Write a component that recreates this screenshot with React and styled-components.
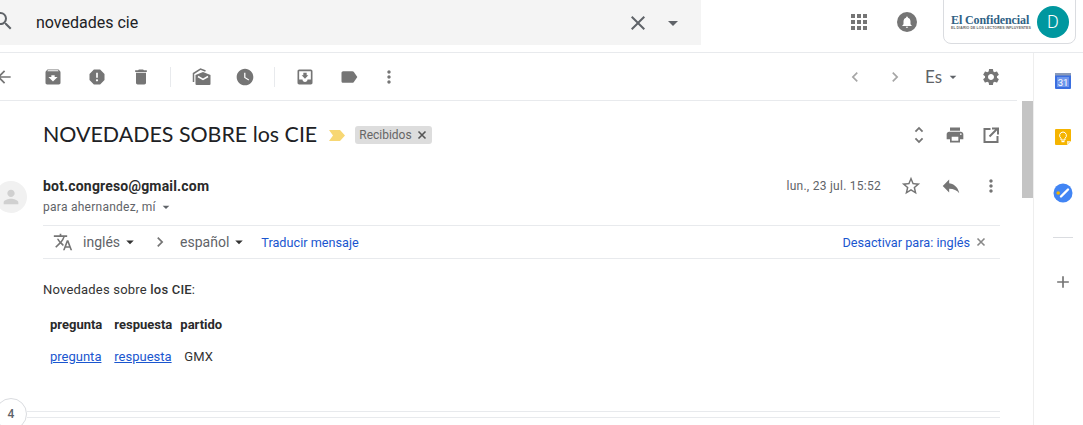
import React from 'react'
import styled, { createGlobalStyle } from 'styled-components'
import {
  MdSearch, MdClose, MdArrowDropDown, MdNotifications, MdArrowBack, MdArchive, MdReport, MdDelete,
  MdWatchLater, MdMoveToInbox, MdLabel, MdMoreVert, MdChevronLeft, MdChevronRight, MdSettings,
  MdUnfoldMore, MdPrint, MdStarBorder, MdReply, MdTranslate, MdAdd, MdPerson,
} from 'react-icons/md'

const GlobalStyle = createGlobalStyle`
  html, body { margin: 0; padding: 0; height: 100%; overflow: hidden; background: #fff; }
  body { font-family: Roboto, "Liberation Sans", sans-serif; color: #222; }
`

const Page = styled.div`
  width: 1083px;
  height: 425px;
  overflow: hidden;
  display: flex;
  flex-direction: column;
`

const Header = styled.header`
  height: 52px;
  flex: none;
  display: flex;
  align-items: flex-start;
  border-bottom: 1px solid #e8eaed;
`

const SearchBox = styled.div`
  width: 701px;
  height: 45px;
  padding-right: 5px;
  box-sizing: border-box;
  background: #f4f4f4;
  display: flex;
  align-items: center;
  color: #5f6368;
  font-size: 16px;
`

const SearchIcon = styled(MdSearch)`
  margin-left: -9px;
  margin-top: -3px;
`

const SearchText = styled.span`
  flex: 1;
  margin-left: 21px;
  color: #202124;
`

const HeaderActions = styled.div`
  margin-left: auto;
  display: flex;
  align-items: flex-start;
  color: #757575;
`

const HeaderIcon = styled.div`
  width: ${p => p.$w || 40}px;
  height: 44px;
  margin-right: ${p => p.$after || 0}px;
  display: flex;
  align-items: center;
  justify-content: center;
`

const AppsGrid = styled.div`
  display: grid;
  grid-template-columns: repeat(3, 4px);
  grid-auto-rows: 4px;
  gap: 2px;
  & > i { background: #757575; display: block; }
`

const BellDisc = styled.div`
  width: 20px;
  height: 20px;
  border-radius: 50%;
  background: #757575;
  color: #fff;
  display: flex;
  align-items: center;
  justify-content: center;
`

const AccountCard = styled.div`
  width: 133px;
  height: 45px;
  margin: -1px 7px 0 0;
  padding: 0 6px 0 7px;
  box-sizing: border-box;
  border: 1px solid #dadce0;
  border-radius: 0 0 8px 8px;
  display: flex;
  align-items: center;
  justify-content: space-between;
`

const Logo = styled.div`
  width: 79px;
  font-family: "Liberation Serif", serif;
  font-weight: 700;
  color: #2f6285;
  line-height: 12px;
  white-space: nowrap;
  font-size: 12px;
  letter-spacing: -0.1px;
`

const LogoTag = styled.div`
  font-family: "Liberation Sans", sans-serif;
  font-size: 3.5px;
  line-height: 4px;
  color: #666;
  letter-spacing: 0.08px;
`

const Avatar = styled.div`
  width: 32px;
  height: 32px;
  border-radius: 50%;
  background: #00979f;
  color: #fff;
  font-size: 18px;
  font-weight: 300;
  display: flex;
  align-items: center;
  justify-content: center;
`

const Body = styled.div`
  flex: 1;
  min-height: 0;
  display: flex;
`

const MainColumn = styled.main`
  width: 1033px;
  flex: none;
  display: flex;
  flex-direction: column;
  min-height: 0;
`

const Toolbar = styled.div`
  height: 47px;
  flex: none;
  margin-right: 16px;
  padding-right: 4px;
  display: flex;
  align-items: center;
  border-bottom: 1px solid #e8eaed;
  color: #757575;
`

const ToolButton = styled.div`
  width: ${p => p.$w || 44}px;
  height: 44px;
  flex: none;
  display: flex;
  align-items: center;
  justify-content: center;
  color: ${p => p.$color || 'inherit'};
`

const BackButton = styled(ToolButton)`
  margin: 0 5px 0 -18px;
`

const ToolDivider = styled.div`
  width: 1px;
  height: 20px;
  margin: 0 8px 0 7px;
  background: #e8eaed;
`

const LangMenu = styled.div`
  margin-left: auto;
  display: flex;
  align-items: center;
`

const LangPicker = styled.div`
  width: 54px;
  padding-left: 10px;
  box-sizing: border-box;
  display: flex;
  align-items: center;
  color: #5f6368;
  font-family: Lato, sans-serif;
  font-size: 17px;
  & > svg { margin-left: 3px; }
`

const ContentRow = styled.div`
  flex: 1;
  min-height: 0;
  display: flex;
`

const Content = styled.div`
  width: 1021px;
  flex: none;
`

const Scrollbar = styled.div`
  width: 11px;
  margin-left: 1px;
  flex: none;
  & > div { height: 97px; background: #c4c4c4; }
`

const SubjectRow = styled.div`
  height: 68px;
  padding: 0 12px 0 44px;
  display: flex;
  align-items: center;
`

const Subject = styled.h1`
  margin: 0 0 3px -1px;
  font-family: Lato, sans-serif;
  font-weight: 400;
  font-size: 21.4px;
  color: #202124;
`

const ImportanceMarker = styled.svg`
  margin-left: 12px;
  width: 16px;
  height: 11px;
`

const Chip = styled.span`
  margin-left: 10px;
  height: 18px;
  padding: 0 5px 0 4px;
  border-radius: 3px;
  background: #dddddd;
  color: #666;
  font-size: 12px;
  display: inline-flex;
  align-items: center;
  gap: 5px;
`

const CrossIcon = styled.svg`
  width: ${p => p.$size}px;
  height: ${p => p.$size}px;
  flex: none;
  stroke: ${p => p.$color};
  stroke-width: 1.6;
  fill: none;
`

const SubjectActions = styled.div`
  margin-left: auto;
  display: flex;
  color: #757575;
`

const SenderRow = styled.div`
  height: 56px;
  display: flex;
  align-items: flex-start;
  padding-right: 10px;
`

const SenderAvatar = styled.div`
  width: 32px;
  height: 32px;
  margin: 12px 16px 0 -5px;
  border-radius: 50%;
  background: #f1f1f1;
  color: #d0d0d0;
  display: flex;
  align-items: center;
  justify-content: center;
`

const SenderInfo = styled.div`
  padding-top: 7px;
`

const SenderName = styled.div`
  font-size: 14px;
  line-height: 20px;
  font-weight: 700;
  color: #2a2a2a;
  letter-spacing: 0.18px;
`

const Recipients = styled.div`
  font-size: 12px;
  line-height: 20px;
  margin-top: 1px;
  color: #5f6368;
  letter-spacing: 0.26px;
  display: flex;
  align-items: center;
  & > svg { margin-left: 2px; }
`

const SenderMeta = styled.div`
  margin-left: auto;
  display: flex;
  align-items: center;
  color: #757575;
  height: 34px;
`

const DateText = styled.span`
  font-size: 12px;
  color: #5f6368;
  letter-spacing: 0.26px;
  margin-right: 10px;
`

const MetaButton = styled.div`
  width: 40px;
  display: flex;
  justify-content: center;
`

const TranslateBar = styled.div`
  height: 32px;
  margin: 0 21px 0 43px;
  border-top: 1px solid #e8eaed;
  border-bottom: 1px solid #e8eaed;
  display: flex;
  align-items: center;
  color: #5f6368;
  font-size: 14px;
`

const TranslateIcon = styled(MdTranslate)`
  margin: 0 1px 0 10px;
  color: #757575;
`

const LangSelect = styled.span`
  margin-left: ${p => p.$gap}px;
  display: inline-flex;
  align-items: center;
`

const BlackCaret = styled(MdArrowDropDown)`
  color: #333;
  margin-left: 1px;
`

const Arrow = styled(MdChevronRight)`
  margin-left: 11px;
  color: #757575;
`

const BarLink = styled.a`
  font-size: 12.7px;
  color: #1a56cf;
  margin-left: ${p => p.$gap || 0}px;
`

const DismissSlot = styled.span`
  margin: 0 14px 0 6px;
  display: flex;
`

const Spacer = styled.div`
  flex: 1;
`

const MessageBody = styled.div`
  margin: 21px 0 0 43px;
  font-size: 13px;
  line-height: 20px;
  color: #333;
`

const Intro = styled.p`
  margin: 0;
  letter-spacing: 0.2px;
  & > b { font-weight: 500; }
`

const PollTable = styled.table`
  border-collapse: collapse;
  margin: 15px 0 0 7px;
`

const HeadCell = styled.th`
  padding: 0 ${p => p.$pad}px 12px 0;
  text-align: left;
  font-weight: 700;
  color: #2a2a2a;
  height: 20px;
`

const DataCell = styled.td`
  padding: 0 ${p => p.$pad || 0}px 0 ${p => p.$left || 0}px;
  height: 20px;
`

const PollLink = styled.a`
  color: #1a56cf;
  text-decoration: underline;
`

const Collapsed = styled.div`
  margin: 31px 21px 0 -5px;
  display: flex;
  align-items: flex-start;
`

const CountCircle = styled.div`
  width: 30px;
  height: 30px;
  flex: none;
  border: 1px solid #dadce0;
  border-radius: 50%;
  color: #5f6368;
  font-size: 12px;
  font-weight: 500;
  display: flex;
  align-items: center;
  justify-content: center;
`

const CollapsedLines = styled.div`
  flex: 1;
  height: 5px;
  margin-top: 13px;
  border-top: 1px solid #e8eaed;
  border-bottom: 1px solid #e8eaed;
`

const SidePanel = styled.aside`
  flex: 1;
  border-left: 1px solid #eeeeee;
  display: flex;
  flex-direction: column;
  align-items: center;
  padding: 18px 0 0 8px;
  gap: 36px;
`

const SideDivider = styled.div`
  width: 20px;
  height: 1px;
  background: #dadce0;
  margin-top: -2px;
`

const SidePlus = styled(MdAdd)`
  color: #757575;
  margin-top: -2px;
`

const AppsIcon = () => (
  <AppsGrid>
    {Array.from({ length: 9 }).map((_, i) => <i key={i} />)}
  </AppsGrid>
)

const Cross = ({ size, color }) => (
  <CrossIcon viewBox="0 0 10 10" $size={size} $color={color}>
    <path d="M1.500 1.500l7 7M8.500 1.500l-7 7" />
  </CrossIcon>
)

const MarkReadIcon = () => (
  <svg width="20" height="20" viewBox="0 0 20 20">
    <path d="M2.500 15V6.500L9.500 2l5 2" fill="none" stroke="#757575" strokeWidth="1.500" />
    <path d="M4.500 8L12 5l7.500 3v9a1 1 0 0 1-1 1h-13a1 1 0 0 1-1-1z" fill="#757575" />
    <path d="M7 9.500l5 3 5-3" fill="none" stroke="#fff" strokeWidth="1.500" />
  </svg>
)

const PopOutIcon = () => (
  <svg width="20" height="20" viewBox="0 0 20 20" fill="none" stroke="#757575" strokeWidth="2">
    <path d="M9.500 4H3.500v13h13v-6" />
    <path d="M8.500 11.500l8-8M11 3.500h6v6" />
  </svg>
)

const CalendarIcon = () => (
  <svg width="20" height="20" viewBox="0 0 20 20">
    <rect x="2" y="2" width="16" height="16" rx="1" fill="#3b6fe0" />
    <rect x="2" y="2" width="16" height="2.500" fill="#8a9ab8" />
    <rect x="4" y="6" width="12" height="10" fill="#6f97ec" />
    <text x="10" y="14.500" textAnchor="middle" fontSize="9.500" fontFamily="Roboto, sans-serif" fill="#fff">31</text>
  </svg>
)

const KeepIcon = () => (
  <svg width="20" height="20" viewBox="0 0 20 20">
    <path d="M3 2h14a1 1 0 0 1 1 1v11l-4 4H3a1 1 0 0 1-1-1V3a1 1 0 0 1 1-1z" fill="#f5b400" />
    <path d="M18 14h-4v4z" fill="#fce8b2" />
    <path d="M10 5a3.500 3.500 0 0 0-2 6.300V13h4v-1.700A3.500 3.500 0 0 0 10 5z" fill="none" stroke="#fff" strokeWidth="1" />
    <rect x="8.500" y="14" width="3" height="1.200" fill="#fff" />
  </svg>
)

const TasksIcon = () => (
  <svg width="20" height="20" viewBox="0 0 20 20">
    <circle cx="10" cy="10" r="9.500" fill="#4285f4" />
    <path d="M8 13.500l7-7" stroke="#fff" strokeWidth="2.400" strokeLinecap="round" />
    <circle cx="5.200" cy="10" r="1.800" fill="#f5b400" />
  </svg>
)

const App = () => (
  <Page>
    <GlobalStyle />
    <Header>
      <SearchBox>
        <SearchIcon size={24} />
        <SearchText>novedades cie</SearchText>
        <HeaderIcon $w={24}><MdClose size={24} /></HeaderIcon>
        <HeaderIcon $w={46}><MdArrowDropDown size={24} /></HeaderIcon>
      </SearchBox>
      <HeaderActions>
        <HeaderIcon $w={40}><AppsIcon /></HeaderIcon>
        <HeaderIcon $w={56} $after={8}>
          <BellDisc><MdNotifications size={14} /></BellDisc>
        </HeaderIcon>
        <AccountCard>
          <Logo>
            El Confidencial
            <LogoTag>EL DIARIO DE LOS LECTORES INFLUYENTES</LogoTag>
          </Logo>
          <Avatar>D</Avatar>
        </AccountCard>
      </HeaderActions>
    </Header>
    <Body>
      <MainColumn>
        <Toolbar>
          <BackButton><MdArrowBack size={20} /></BackButton>
          <ToolButton><MdArchive size={20} /></ToolButton>
          <ToolButton><MdReport size={20} /></ToolButton>
          <ToolButton><MdDelete size={20} /></ToolButton>
          <ToolDivider />
          <ToolButton><MarkReadIcon /></ToolButton>
          <ToolButton><MdWatchLater size={20} /></ToolButton>
          <ToolDivider />
          <ToolButton><MdMoveToInbox size={20} /></ToolButton>
          <ToolButton><MdLabel size={20} /></ToolButton>
          <ToolButton $w={36}><MdMoreVert size={20} /></ToolButton>
          <LangMenu>
            <ToolButton $w={40} $color="#a6a6a6"><MdChevronLeft size={20} /></ToolButton>
            <ToolButton $w={40} $color="#a6a6a6"><MdChevronRight size={20} /></ToolButton>
            <LangPicker>Es<MdArrowDropDown size={16} /></LangPicker>
            <ToolButton><MdSettings size={20} /></ToolButton>
          </LangMenu>
        </Toolbar>
        <ContentRow>
          <Content>
            <SubjectRow>
              <Subject>NOVEDADES SOBRE los CIE</Subject>
              <ImportanceMarker viewBox="0 0 16 11">
                <path d="M0 0h11l5 5.500-5 5.500H0l4-5.500z" fill="#f7d774" />
              </ImportanceMarker>
              <Chip>Recibidos<Cross size={10} color="#555" /></Chip>
              <SubjectActions>
                <ToolButton $w={36}><MdUnfoldMore size={22} /></ToolButton>
                <ToolButton $w={36}><MdPrint size={20} /></ToolButton>
                <ToolButton $w={36}><PopOutIcon /></ToolButton>
              </SubjectActions>
            </SubjectRow>
            <SenderRow>
              <SenderAvatar><MdPerson size={22} /></SenderAvatar>
              <SenderInfo>
                <SenderName>bot.congreso@gmail.com</SenderName>
                <Recipients>para ahernandez, mí<MdArrowDropDown size={16} /></Recipients>
              </SenderInfo>
              <SenderMeta>
                <DateText>lun., 23 jul. 15:52</DateText>
                <MetaButton><MdStarBorder size={22} /></MetaButton>
                <MetaButton><MdReply size={22} /></MetaButton>
                <MetaButton><MdMoreVert size={20} /></MetaButton>
              </SenderMeta>
            </SenderRow>
            <TranslateBar>
              <TranslateIcon size={20} />
              <LangSelect $gap={9}>inglés<BlackCaret size={18} /></LangSelect>
              <Arrow size={20} />
              <LangSelect $gap={10}>español<BlackCaret size={18} /></LangSelect>
              <BarLink $gap={13}>Traducir mensaje</BarLink>
              <Spacer />
              <BarLink>Desactivar para: inglés</BarLink>
              <DismissSlot><Cross size={10} color="#888" /></DismissSlot>
            </TranslateBar>
            <MessageBody>
              <Intro>Novedades sobre <b>los CIE</b>:</Intro>
              <PollTable>
                <thead>
                  <tr>
                    <HeadCell $pad={12}>pregunta</HeadCell>
                    <HeadCell $pad={8}>respuesta</HeadCell>
                    <HeadCell $pad={0}>partido</HeadCell>
                  </tr>
                </thead>
                <tbody>
                  <tr>
                    <DataCell><PollLink>pregunta</PollLink></DataCell>
                    <DataCell><PollLink>respuesta</PollLink></DataCell>
                    <DataCell $left={4}>GMX</DataCell>
                  </tr>
                </tbody>
              </PollTable>
            </MessageBody>
            <Collapsed>
              <CountCircle>4</CountCircle>
              <CollapsedLines />
            </Collapsed>
          </Content>
          <Scrollbar><div /></Scrollbar>
        </ContentRow>
      </MainColumn>
      <SidePanel>
        <CalendarIcon />
        <KeepIcon />
        <TasksIcon />
        <SideDivider />
        <SidePlus size={20} />
      </SidePanel>
    </Body>
  </Page>
)

export default App
